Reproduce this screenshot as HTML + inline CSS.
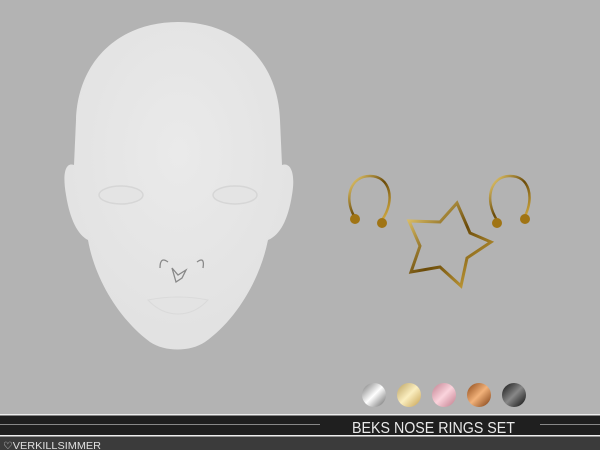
<!DOCTYPE html>
<html><head><style>
body{margin:0;width:600px;height:450px;overflow:hidden;background:#b3b3b3;font-family:"Liberation Sans",sans-serif;position:relative}
</style></head><body>
<svg width="600" height="450" style="position:absolute;left:0;top:0">
<defs>
<radialGradient id="fg" cx="0.5" cy="0.4" r="0.7"><stop offset="0" stop-color="#eaeaea"/><stop offset="1" stop-color="#e0e0e0"/></radialGradient>
<linearGradient id="gold" x1="0" y1="0" x2="1" y2="1"><stop offset="0" stop-color="#f3d77a"/><stop offset="0.5" stop-color="#6a4a08"/><stop offset="1" stop-color="#e0b84a"/></linearGradient>
<linearGradient id="s1" x1="0" y1="0" x2="1" y2="1"><stop offset="0" stop-color="#777"/><stop offset=".5" stop-color="#fff"/><stop offset="1" stop-color="#666"/></linearGradient>
<linearGradient id="s2" x1="0" y1="0" x2="1" y2="1"><stop offset="0" stop-color="#b9a060"/><stop offset=".5" stop-color="#fbeec0"/><stop offset="1" stop-color="#c5a050"/></linearGradient>
<linearGradient id="s3" x1="0" y1="0" x2="1" y2="1"><stop offset="0" stop-color="#c0808f"/><stop offset=".5" stop-color="#fad3dc"/><stop offset="1" stop-color="#c07a8a"/></linearGradient>
<linearGradient id="s4" x1="0" y1="0" x2="1" y2="1"><stop offset="0" stop-color="#8a4515"/><stop offset=".5" stop-color="#f2b27a"/><stop offset="1" stop-color="#7a3a10"/></linearGradient>
<linearGradient id="s5" x1="0" y1="0" x2="1" y2="1"><stop offset="0" stop-color="#111"/><stop offset=".5" stop-color="#888"/><stop offset="1" stop-color="#0a0a0a"/></linearGradient>
</defs>
<path d="M178,22 C120,22 78,60 76,120 L74,165 C66,162 62,172 66,195 C70,220 78,235 88,240 C95,280 120,320 150,342 C165,352 190,352 205,342 C236,320 260,280 268,240 C280,235 288,220 292,195 C296,172 290,162 282,165 L280,120 C278,60 236,22 178,22 Z" fill="url(#fg)"/>
<ellipse cx="121" cy="195" rx="22" ry="9" fill="#e4e4e4" stroke="#d6d6d6" stroke-width="1.5"/>
<ellipse cx="235" cy="195" rx="22" ry="9" fill="#e4e4e4" stroke="#d6d6d6" stroke-width="1.5"/>
<path d="M148,300 Q178,294 208,300 Q195,314 178,314 Q161,314 148,300Z" fill="#e3e3e3" stroke="#dadada"/>
<path d="M160,268 Q160,256 168,262 M197,262 Q205,256 203,268 M172,268 L178,275 L186,270 L182,278 L176,282Z" fill="none" stroke="#888" stroke-width="1.3"/>
<g fill="none" stroke="url(#gold)" stroke-width="2.5">
<path d="M354,216 C344,198 350,176 370,176 C390,176 396,200 382,220"/>
<path d="M497,220 C484,200 490,176 510,176 C530,176 534,198 525,216"/>
<path d="M457,203 L470,233 L491,242 L467,258 L461,286 L440,267 L411,272 L420,246 L409,221 L440,222Z" stroke-width="3"/>
</g>
<g fill="#a07414"><circle cx="355" cy="219" r="5"/><circle cx="382" cy="223" r="5"/><circle cx="497" cy="223" r="5"/><circle cx="525" cy="219" r="5"/></g>
<circle cx="374" cy="395" r="12" fill="url(#s1)"/>
<circle cx="409" cy="395" r="12" fill="url(#s2)"/>
<circle cx="444" cy="395" r="12" fill="url(#s3)"/>
<circle cx="479" cy="395" r="12" fill="url(#s4)"/>
<circle cx="514" cy="395" r="12" fill="url(#s5)"/>
<rect x="0" y="414" width="600" height="22" fill="#1f1f1f"/>
<rect x="0" y="414" width="600" height="1.5" fill="#eee"/>
<rect x="0" y="435" width="600" height="1.5" fill="#eee"/>
<rect x="0" y="424" width="320" height="1" fill="#888"/>
<rect x="540" y="424" width="60" height="1" fill="#888"/>
<rect x="0" y="436.5" width="600" height="14" fill="#3b3b3b"/>
<text x="352" y="433" font-family="Liberation Sans Narrow, Liberation Sans, sans-serif" font-size="16" fill="#e8e8e8" textLength="163" lengthAdjust="spacingAndGlyphs">BEKS NOSE RINGS SET</text>
<text x="3" y="449" font-size="10" fill="#e0e0e0" textLength="98" lengthAdjust="spacingAndGlyphs">♡VERKILLSIMMER</text>
</svg>
</body></html>
